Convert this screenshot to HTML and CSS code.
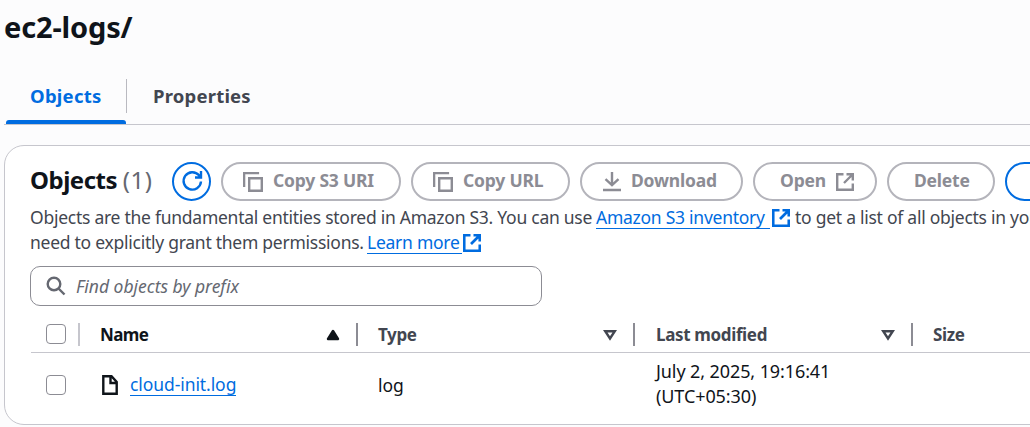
FILE: index.html
```
<!DOCTYPE html>
<html lang="en">
<head>
<meta charset="utf-8">
<title>ec2-logs/</title>
<link rel="stylesheet" href="styles.css">
</head>
<body>
<svg class="defs" aria-hidden="true">
  <symbol id="copy" viewBox="0 0 20 20"><path d="M1.100 15V1.100h15M6.200 6.200h12.600v12.600H6.200z"/></symbol>
  <symbol id="external" viewBox="0 0 18 18"><path d="M7.500 1.200H1.200v15.600h15.600v-6.300M10.500 1.200h6.300v6.300M16.500 1.500L8 10"/></symbol>
</svg>
<h1 class="title"><span>ec2-logs/</span></h1>
<nav class="tabs">
  <a class="tab active"><span>Objects</span></a>
  <a class="tab properties"><span>Properties</span></a>
</nav>
<main class="panel">
  <header class="toolbar">
    <h2 class="heading"><span>Objects</span> <span class="count">(1)</span></h2>
    <button class="btn refresh" aria-label="Refresh"><svg width="22" height="22" viewBox="0 0 22 22"><path d="M20 11.500a8.700 8.700 0 1 1-2-6.200L19.500 7M20 1v6.500h-6"/></svg></button>
    <button class="btn s3"><svg width="20" height="20"><use href="#copy"/></svg><span>Copy S3 URI</span></button>
    <button class="btn url"><svg width="20" height="20"><use href="#copy"/></svg><span>Copy URL</span></button>
    <button class="btn download"><svg width="18" height="20" viewBox="0 0 18 20"><path d="M0 18h18M9 0v13M2.500 7.200L9 13.200l6.500-6"/></svg><span>Download</span></button>
    <button class="btn open"><span>Open</span><svg width="18" height="18"><use href="#external"/></svg></button>
    <button class="btn delete"><span>Delete</span></button>
    <button class="btn actions"></button>
  </header>
  <div class="description">
    <p><span class="d1">Objects are the fundamental entities stored in Amazon S3. You can use</span><a class="link inventory">Amazon S3 inventory</a><svg width="18" height="18"><use href="#external"/></svg><span class="d2">to get a list of all objects in your</span></p>
    <p><span class="d3">need to explicitly grant them permissions.</span><a class="link learn">Learn more</a><svg width="18" height="18"><use href="#external"/></svg></p>
  </div>
  <div class="search"><svg width="20" height="20" viewBox="0 0 20 20"><circle cx="8" cy="8" r="6.300"/><path d="M12.500 12.500l6 6"/></svg><span>Find objects by prefix</span></div>
  <div class="row head">
    <div class="cell select"><i class="box"></i></div>
    <div class="cell name"><span>Name</span><svg width="14" height="12" viewBox="0 0 14 12"><path class="solid" d="M7 2l5 8H2z"/></svg></div>
    <div class="cell type"><span>Type</span><svg width="14" height="12" viewBox="0 0 14 12"><path d="M2.200 2.200h9.600L7 9.500z"/></svg></div>
    <div class="cell modified"><span>Last modified</span><svg width="14" height="12" viewBox="0 0 14 12"><path d="M2.200 2.200h9.600L7 9.500z"/></svg></div>
    <div class="cell size"><span>Size</span></div>
  </div>
  <div class="row data">
    <div class="cell select"><i class="box"></i></div>
    <div class="cell name"><svg width="16" height="20" viewBox="0 0 16 20"><path d="M1.300 1.300h8.200l5.200 5.700v11.700H1.300zM8.500 1.500V8h6"/></svg><a class="link file">cloud-init.log</a></div>
    <div class="cell type"><span>log</span></div>
    <div class="cell modified"><div><p class="date">July 2, 2025, 19:16:41</p><p class="zone">(UTC+05:30)</p></div></div>
  </div>
</main>
</body>
</html>
```
FILE: styles.css
```
* { box-sizing: border-box; }
html { overflow: hidden; }
body {
  margin: 0;
  height: 427px;
  overflow: hidden;
  background: #fcfcfd;
  color: #0f141a;
  font: 17.500px/25px "Noto Sans", "Open Sans", sans-serif;
  white-space: nowrap;
}
h1, h2, p { margin: 0; }
svg { flex: none; fill: none; stroke: currentColor; stroke-width: 2.400; }
.defs { position: absolute; width: 0; height: 0; }
.title { height: 79px; padding: 7px 0 0 4px; font-size: 29px; line-height: 40px; letter-spacing: -0.150px; }
.tabs { display: flex; height: 46px; margin-left: 4px; border-bottom: 1px solid #c6c6cd; font-weight: 700; font-size: 18.500px; color: #424650; }
.tab { height: 34px; padding: 4px 0 0 26px; }
.tab.active { position: relative; width: 123px; color: #006ce0; border-right: 1px solid #b9b9c0; letter-spacing: 0.250px; }
.tab.active::after { content: ""; position: absolute; left: 2px; top: 41px; width: 120px; height: 4px; background: #006ce0; border-radius: 3px 3px 0 0; }
.properties { letter-spacing: 0.200px; }
.panel { width: 1200px; height: 280px; margin: 20px 0 0 4px; border: 1px solid #c6c6cd; border-radius: 20px; background: #fff; padding: 16px 25px 0; }
.toolbar { display: flex; gap: 10px; height: 39px; }
.heading { width: 132px; font-size: 24px; line-height: 36px; letter-spacing: -0.500px; }
.count { color: #656871; font-weight: 400; letter-spacing: 0.500px; }
.btn { display: flex; align-items: center; height: 39px; padding: 0 20px; border: 2px solid #b4b4bb; border-radius: 20px; background: #fff; color: #8c8c94; font: 700 17.500px/25px "Noto Sans", sans-serif; letter-spacing: -0.200px; gap: 10px; flex: none; }
.btn span { position: relative; top: -1px; }
.refresh { width: 39px; padding: 0 0 2px; justify-content: center; border-color: #006ce0; color: #006ce0; }
.s3 { width: 180px; }
.url { width: 159px; }
.download { width: 163px; padding-left: 21px; }
.open { width: 124px; padding-left: 25px; }
.delete { width: 108px; padding-left: 25px; }
.actions { width: 120px; border-color: #006ce0; }
.description { margin-top: 4px; height: 50px; color: #424650; letter-spacing: -0.260px; }
.description p { display: flex; height: 25px; align-items: center; }
.description svg { color: #006ce0; stroke-width: 2.700; margin-left: 1px; }
.link { color: #006ce0; border-bottom: 1.500px solid; line-height: 21px; }
.d1 { width: 566px; }
.inventory { width: 174px; margin-right: 1px; }
.d2 { margin-left: 5px; }
.d3 { width: 337px; }
.learn { width: 95px; }
.search { display: flex; align-items: center; gap: 10px; width: 512px; height: 40px; margin-top: 11px; padding-left: 15px; border: 1px solid #8c8c94; border-radius: 10px; color: #656871; font-style: italic; letter-spacing: -0.020px; }
.row { display: flex; }
.head { height: 47px; border-bottom: 1px solid #c6c6cd; padding-top: 17px; margin-left: 1px; color: #424650; font-weight: 700; font-size: 17px; letter-spacing: -0.350px; }
.cell { display: flex; align-items: center; height: 23px; }
.head .cell { border-right: 2px solid #8c8c94; padding-right: 16px; justify-content: space-between; }
.select { width: 49px; padding-left: 15px; }
.head .cell.select { border-color: #c6c6cd; padding-right: 0; padding-bottom: 1px; }
.box { flex: none; width: 20px; height: 20px; border: 1px solid #8c8c94; border-radius: 4px; }
.name { width: 278px; padding-left: 20px; }
.head .name { color: #0f141a; letter-spacing: -0.600px; }
.solid { fill: currentColor; stroke-linejoin: round; }
.type { width: 277px; padding-left: 20px; }
.modified { width: 278px; padding-left: 21px; }
.head .size { border: 0; padding-left: 20px; }
.data { margin-left: 1px; }
.data .cell { height: 64px; }
.data .name { gap: 12px; padding-left: 22px; }
.data .modified { padding-bottom: 2px; font-size: 18px; letter-spacing: -0.100px; }
.file { letter-spacing: -0.080px; }
```
